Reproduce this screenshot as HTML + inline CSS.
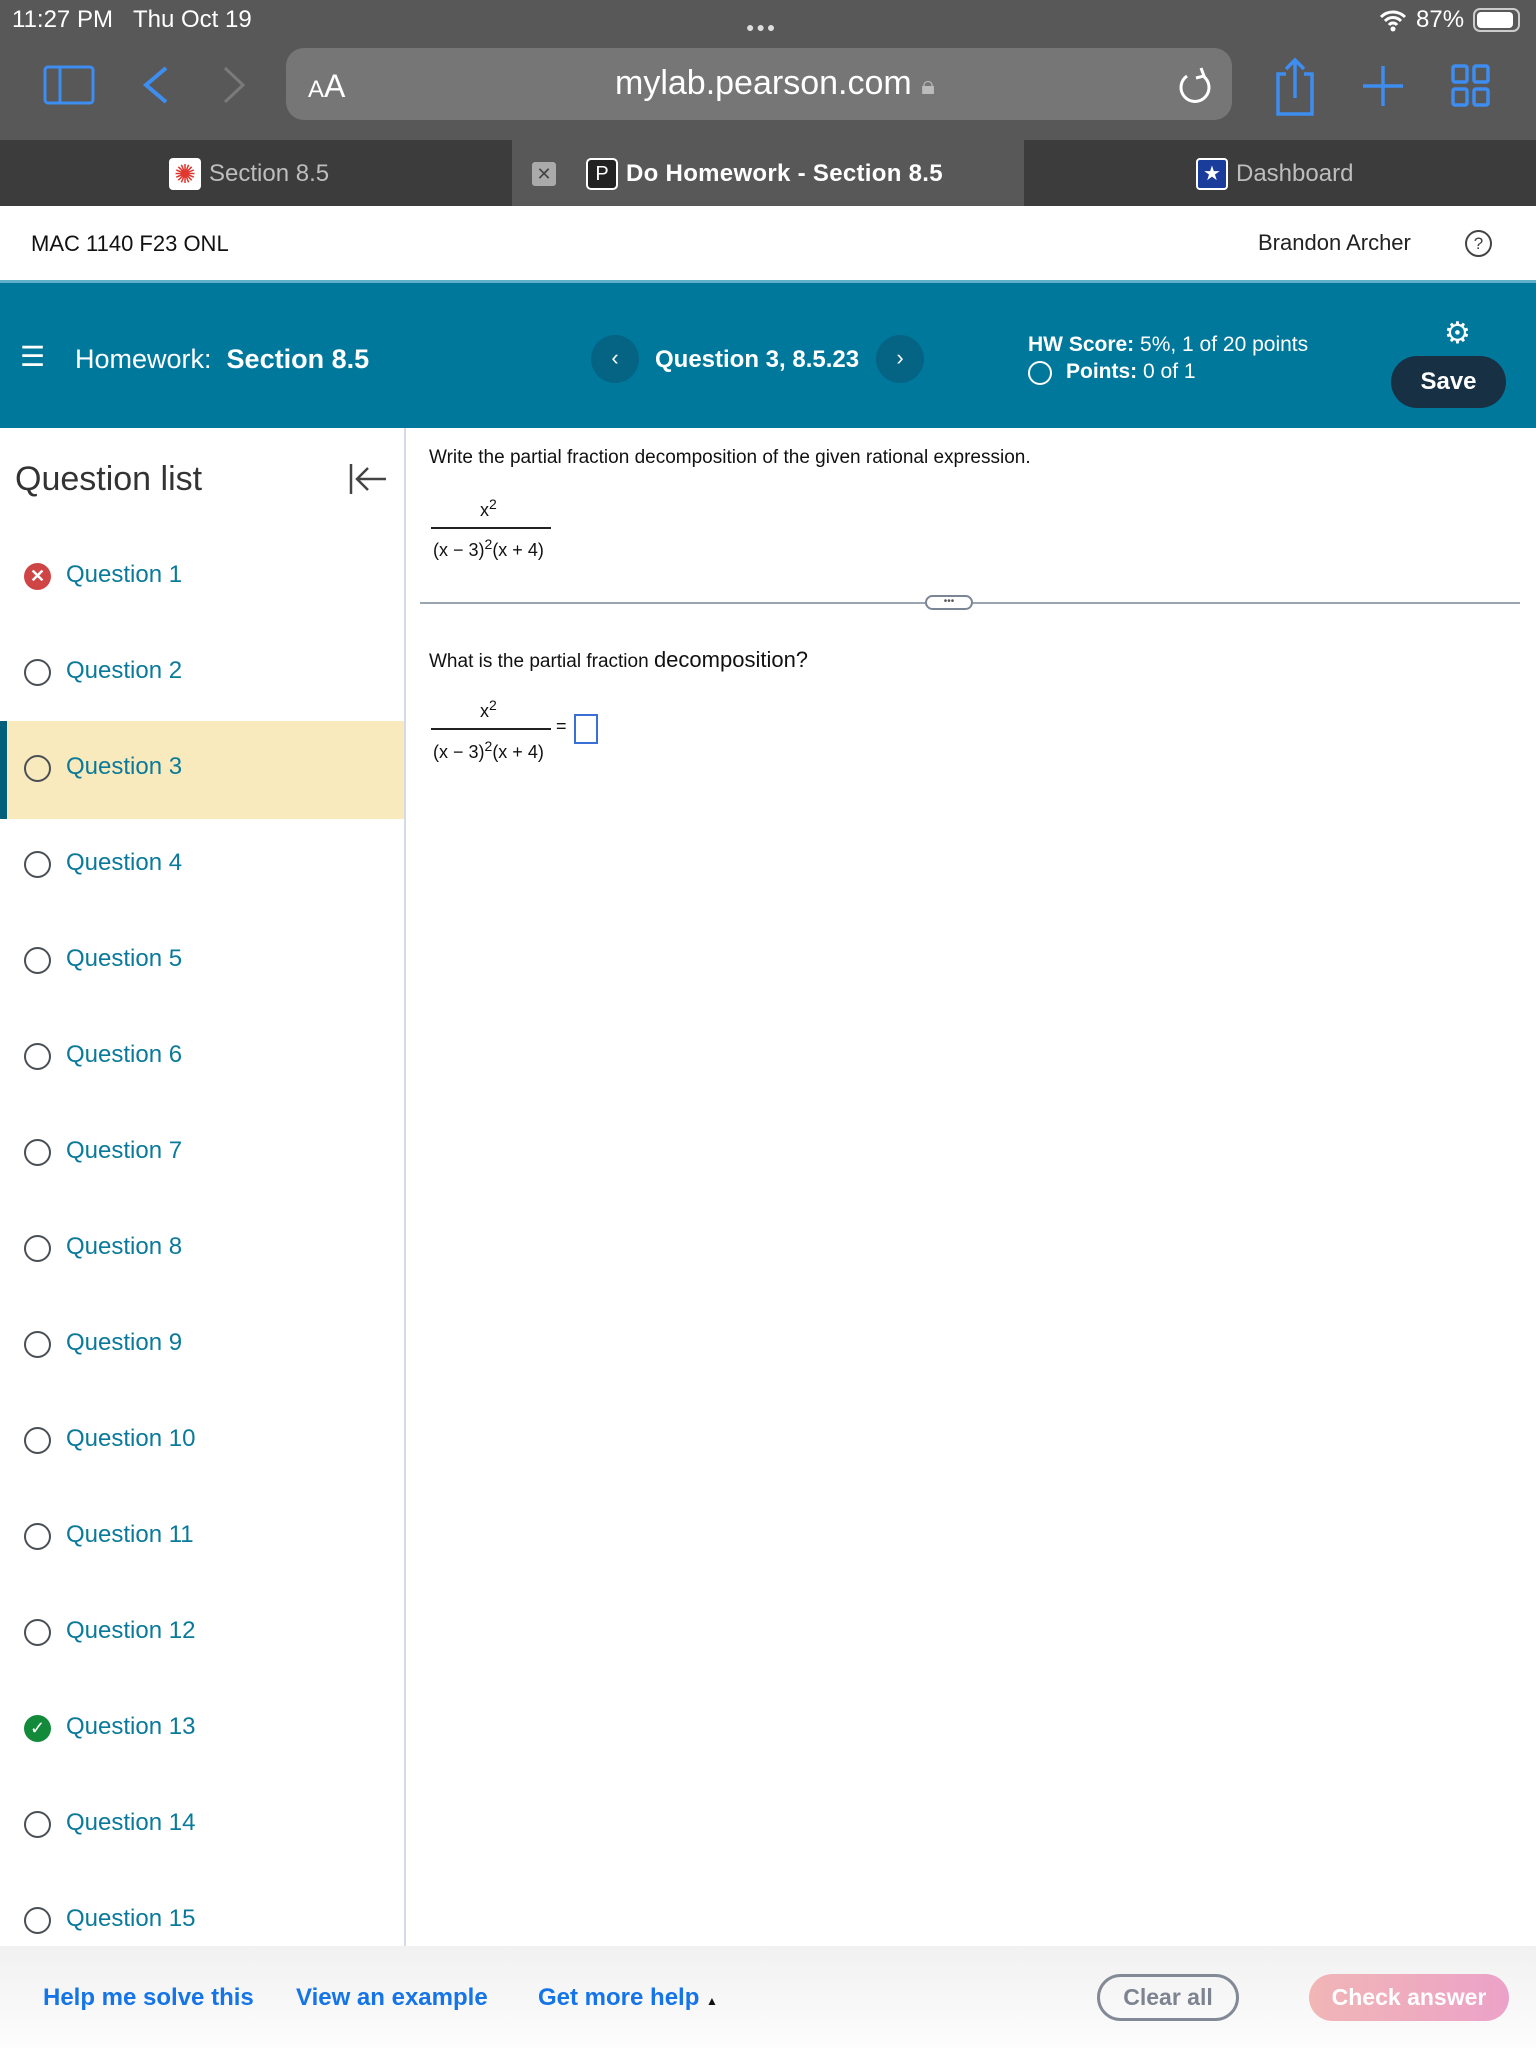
<!DOCTYPE html>
<html><head><meta charset="utf-8"><style>
*{margin:0;padding:0;box-sizing:border-box}
body{width:1536px;height:2048px;position:relative;overflow:hidden;font-family:"Liberation Sans",Arial,sans-serif;background:#fff}
.a{position:absolute}
.q{position:absolute;left:0;width:404px;height:96px}
.q .c{position:absolute;left:24px;top:35px;width:27px;height:27px;border:2.5px solid #4a4f55;border-radius:50%}
.q span{position:absolute;left:66px;top:33px;font-size:24px;color:#0b7a9a}
.lk{position:absolute;top:1984px;font-size:24px;font-weight:bold;color:#1474e8}
</style></head><body>
<div class="a" style="left:0;top:0;width:1536px;height:140px;background:#585858"></div>
<div class="a" style="left:12px;top:6px;font-size:24px;color:#fff">11:27 PM&nbsp;&nbsp;&nbsp;Thu Oct 19</div>
<div class="a" style="left:746px;top:19px;font-size:14px;color:#ddd;letter-spacing:2px">●●●</div>
<div class="a" style="left:1416px;top:6px;font-size:24px;color:#fff">87%</div>
<div class="a" style="left:1473px;top:8px;width:47px;height:24px;border:2px solid #ccc;border-radius:7px;padding:2px"><div style="width:36px;height:16px;background:#fff;border-radius:4px"></div></div>
<svg class="a" style="left:1378px;top:8px" width="30" height="24" viewBox="0 0 30 24"><path d="M3 9a17 17 0 0 1 24 0M7 13a11 11 0 0 1 16 0M11 17a5 5 0 0 1 8 0" stroke="#fff" stroke-width="3" fill="none"/><circle cx="15" cy="21" r="2.5" fill="#fff"/></svg>
<svg class="a" style="left:40px;top:60px" width="600" height="50" viewBox="0 0 600 50"><rect x="5" y="7" width="48" height="36" rx="3" stroke="#3d8ef0" stroke-width="3" fill="none"/><line x1="20" y1="7" x2="20" y2="43" stroke="#3d8ef0" stroke-width="3"/><path d="M126 8L106 25L126 42" stroke="#3d8ef0" stroke-width="4" fill="none"/><path d="M185 8L203 25L185 42" stroke="#7a7a7a" stroke-width="3" fill="none"/></svg>
<div class="a" style="left:286px;top:48px;width:946px;height:72px;background:#767676;border-radius:18px"></div>
<div class="a" style="left:308px;top:68px;font-size:32px;color:#fff"><span style="font-size:24px">A</span>A</div>
<div class="a" style="left:615px;top:64px;font-size:34px;color:#fff">mylab.pearson.com <span style="color:#bbb;font-size:26px">🔒︎</span></div>
<svg class="a" style="left:1175px;top:64px" width="40" height="44" viewBox="0 0 40 44"><path d="M28 12A14 14 0 1 1 12 12" stroke="#fff" stroke-width="3" fill="none"/><path d="M26 4l3 8-8 2" stroke="#fff" stroke-width="3" fill="none"/></svg>
<svg class="a" style="left:1270px;top:56px" width="270" height="64" viewBox="0 0 270 64"><path d="M16 18H8v40h34V18h-8M25 42V4M16 13l9-9 9 9" stroke="#3d8ef0" stroke-width="3.5" fill="none"/><path d="M113 10v40M93 30h40" stroke="#3d8ef0" stroke-width="3.5"/><rect x="183" y="10" width="14" height="16" rx="2" stroke="#3d8ef0" stroke-width="3.5" fill="none"/><rect x="204" y="10" width="14" height="16" rx="2" stroke="#3d8ef0" stroke-width="3.5" fill="none"/><rect x="183" y="33" width="14" height="16" rx="2" stroke="#3d8ef0" stroke-width="3.5" fill="none"/><rect x="204" y="33" width="14" height="16" rx="2" stroke="#3d8ef0" stroke-width="3.5" fill="none"/></svg>
<div class="a" style="left:0;top:140px;width:512px;height:66px;background:#3c3c3c"></div>
<div class="a" style="left:512px;top:140px;width:512px;height:66px;background:#585858"></div>
<div class="a" style="left:1024px;top:140px;width:512px;height:66px;background:#3c3c3c"></div>
<div class="a" style="left:169px;top:158px;width:32px;height:32px;background:#fff;border-radius:4px;color:#e0382e;font-size:26px;line-height:32px;text-align:center">✺</div>
<div class="a" style="left:209px;top:160px;font-size:24px;color:#bdbdbd">Section 8.5</div>
<div class="a" style="left:532px;top:162px;width:24px;height:24px;background:#aaa;border-radius:3px;font-size:18px;line-height:24px;text-align:center;color:#444">✕</div>
<div class="a" style="left:586px;top:158px;width:32px;height:32px;border:2px solid #fff;border-radius:5px;background:#222;color:#fff;font-size:20px;line-height:28px;text-align:center">P</div>
<div class="a" style="left:626px;top:160px;font-size:24px;color:#fff;font-weight:bold;letter-spacing:0.3px">Do Homework - Section 8.5</div>
<div class="a" style="left:1196px;top:158px;width:32px;height:32px;background:#1a3c9a;border:2px solid #fff;border-radius:4px;color:#fff;font-size:20px;line-height:28px;text-align:center">★</div>
<div class="a" style="left:1236px;top:160px;font-size:24px;color:#bdbdbd">Dashboard</div>
<div class="a" style="left:31px;top:231px;font-size:22px;color:#111">MAC 1140 F23 ONL</div>
<div class="a" style="left:1258px;top:230px;font-size:22px;color:#222">Brandon Archer</div>
<div class="a" style="left:1465px;top:230px;width:27px;height:27px;border:2px solid #444;border-radius:50%;font-size:17px;line-height:23px;text-align:center;color:#444">?</div>
<div class="a" style="left:0;top:280px;width:1536px;height:148px;background:#00789c;border-top:3px solid #5fb0c8"></div>
<div class="a" style="left:20px;top:340px;font-size:28px;color:#fff">☰</div>
<div class="a" style="left:75px;top:344px;font-size:27px;color:#fff">Homework:&nbsp; <b>Section 8.5</b></div>
<div class="a" style="left:591px;top:335px;width:48px;height:48px;border-radius:50%;background:#056384;color:#fff;font-size:22px;line-height:46px;text-align:center">‹</div>
<div class="a" style="left:876px;top:335px;width:48px;height:48px;border-radius:50%;background:#056384;color:#fff;font-size:22px;line-height:46px;text-align:center">›</div>
<div class="a" style="left:655px;top:346px;font-size:24px;color:#fff;font-weight:bold">Question 3, 8.5.23</div>
<div class="a" style="left:1028px;top:333px;font-size:21px;color:#fff"><b>HW Score:</b> 5%, 1 of 20 points</div>
<div class="a" style="left:1028px;top:361px;width:24px;height:24px;border:2.5px solid #fff;border-radius:50%"></div>
<div class="a" style="left:1066px;top:360px;font-size:21px;color:#fff"><b>Points:</b> 0 of 1</div>
<div class="a" style="left:1444px;top:316px;font-size:30px;color:#fff">⚙︎</div>
<div class="a" style="left:1391px;top:356px;width:115px;height:52px;border-radius:26px;background:#173044;color:#fff;font-size:24px;font-weight:bold;line-height:52px;text-align:center">Save</div>
<div class="a" style="left:404px;top:428px;width:2px;height:1518px;background:#d5dbe5"></div>
<div class="a" style="left:15px;top:460px;font-size:34px;color:#333">Question list</div>
<svg class="a" style="left:348px;top:462px" width="40" height="34" viewBox="0 0 40 34"><path d="M3 2v30M38 17H9M20 6L9 17l11 11" stroke="#444" stroke-width="2.5" fill="none"/></svg>
<div class="a" style="left:0;top:721px;width:404px;height:98px;background:#f8eabc;border-left:7px solid #005f7a"></div>
<div class="q" style="top:528px"><div class="c" style="border:none;background:#cf4444;color:#fff;font-size:18px;line-height:27px;text-align:center;font-weight:bold">✕</div><span>Question 1</span></div>
<div class="q" style="top:624px"><div class="c"></div><span>Question 2</span></div>
<div class="q" style="top:720px"><div class="c"></div><span>Question 3</span></div>
<div class="q" style="top:816px"><div class="c"></div><span>Question 4</span></div>
<div class="q" style="top:912px"><div class="c"></div><span>Question 5</span></div>
<div class="q" style="top:1008px"><div class="c"></div><span>Question 6</span></div>
<div class="q" style="top:1104px"><div class="c"></div><span>Question 7</span></div>
<div class="q" style="top:1200px"><div class="c"></div><span>Question 8</span></div>
<div class="q" style="top:1296px"><div class="c"></div><span>Question 9</span></div>
<div class="q" style="top:1392px"><div class="c"></div><span>Question 10</span></div>
<div class="q" style="top:1488px"><div class="c"></div><span>Question 11</span></div>
<div class="q" style="top:1584px"><div class="c"></div><span>Question 12</span></div>
<div class="q" style="top:1680px"><div class="c" style="border:none;background:#13893a;color:#fff;font-size:18px;line-height:27px;text-align:center">✓</div><span>Question 13</span></div>
<div class="q" style="top:1776px"><div class="c"></div><span>Question 14</span></div>
<div class="q" style="top:1872px"><div class="c"></div><span>Question 15</span></div>
<div class="a" style="left:429px;top:447px;font-size:19px;color:#111">Write the partial fraction decomposition of the given rational expression.</div>
<div class="a" style="left:480px;top:496px;font-size:18px;color:#111">x<sup style="font-size:14px">2</sup></div>
<div class="a" style="left:431px;top:527px;width:120px;height:1.5px;background:#222"></div>
<div class="a" style="left:433px;top:536px;font-size:18px;color:#111">(x − 3)<sup style="font-size:14px">2</sup>(x + 4)</div>
<div class="a" style="left:420px;top:602px;width:1100px;height:2px;background:#9aa3b0"></div>
<div class="a" style="left:925px;top:595px;width:48px;height:15px;border:2px solid #7a8595;border-radius:8px;background:#fff;font-size:10px;line-height:9px;text-align:center;color:#555">•••</div>
<div class="a" style="left:429px;top:647px;font-size:19px;color:#111">What is the partial fraction <span style="font-size:22px">decomposition?</span></div>
<div class="a" style="left:480px;top:697px;font-size:18px;color:#111">x<sup style="font-size:14px">2</sup></div>
<div class="a" style="left:431px;top:728px;width:120px;height:1.5px;background:#222"></div>
<div class="a" style="left:433px;top:738px;font-size:18px;color:#111">(x − 3)<sup style="font-size:14px">2</sup>(x + 4)</div>
<div class="a" style="left:556px;top:716px;font-size:18px;color:#111">=</div>
<div class="a" style="left:574px;top:714px;width:24px;height:30px;border:2px solid #3a6fd8"></div>
<div class="a" style="left:0;top:1946px;width:1536px;height:102px;background:linear-gradient(#f1f1f1,#fdfdfd)"></div>
<div class="lk" style="left:43px">Help me solve this</div>
<div class="lk" style="left:296px">View an example</div>
<div class="lk" style="left:538px">Get more help <span style="font-size:12px;color:#111">▲</span></div>
<div class="a" style="left:1097px;top:1974px;width:142px;height:47px;border:3px solid #838a96;border-radius:24px;font-size:23px;font-weight:bold;color:#7d8390;text-align:center;line-height:41px">Clear all</div>
<div class="a" style="left:1309px;top:1974px;width:200px;height:47px;border-radius:24px;background:linear-gradient(90deg,#f1b6b6,#eca2c8);font-size:23px;font-weight:bold;color:#fff;text-align:center;line-height:47px">Check answer</div>
</body></html>
